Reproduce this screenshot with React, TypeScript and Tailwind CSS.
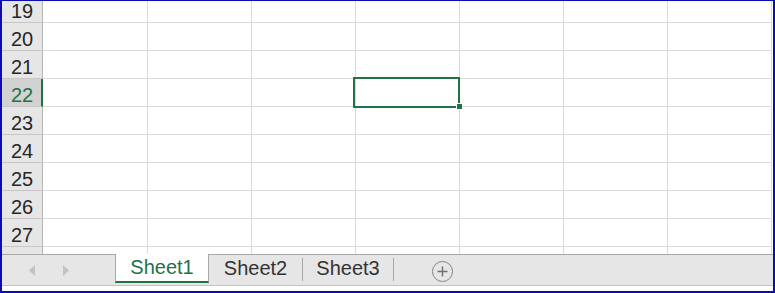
const ROWS = [19, 20, 21, 22, 23, 24, 25, 26, 27, 28];
const COLS = ["w-[105px]", "w-[104px]", "w-[104px]", "w-[104px]", "w-[104px]", "w-[104px]", "w-[104px]"];
const ACTIVE_ROW = 22;
const ACTIVE_COL = 3;
const LAST_VISIBLE = 27;

function Row({ n }: { n: number }) {
  const active = n === ACTIVE_ROW;
  return (
    <div className="flex h-[28px] shrink-0">
      <div
        className={
          active
            ? "flex w-[41px] shrink-0 items-end justify-center border-b border-r-2 border-b-[#c6c6c6] border-r-[#217346] bg-[#d2d2d2] pb-px pl-[1px] text-[#217346]"
            : "flex w-[41px] shrink-0 items-end justify-center border-b border-r border-b-[#c6c6c6] border-r-[#b4b4b4] bg-[#e6e6e6] pb-px text-[#262626]"
        }
      >
        {n <= LAST_VISIBLE && <span className="text-[20px] leading-[20px]">{n}</span>}
      </div>
      {COLS.map((w, i) => (
        <div key={i} className={`relative ${w} shrink-0 border-b border-r border-[#dadada] bg-white`}>
          {active && i === ACTIVE_COL && (
            <>
              <div className="absolute -left-[3px] -top-[2px] z-10 h-[31px] w-[107px] border-2 border-[#217346]" />
              <div className="absolute -bottom-[4px] -right-[4px] z-20 h-[7px] w-[7px] border border-white bg-[#217346]" />
            </>
          )}
        </div>
      ))}
    </div>
  );
}

function Tab({ label, w }: { label: string; w: string }) {
  return (
    <div className={`flex h-[28px] ${w} shrink-0 items-center`}>
      <span className="flex-1 pb-[2px] text-center text-[20px] leading-[20px] text-[#333333]">{label}</span>
      <div className="h-[23px] w-px bg-[#a6a6a6]" />
    </div>
  );
}

export default function App() {
  return (
    <div
      className="flex h-[293px] w-[775px] flex-col overflow-hidden border-b-2 border-l-2 border-r-2 border-t border-[#0c0cb4] bg-white"
      style={{ fontFamily: '"Liberation Sans", Arial, sans-serif' }}
    >
      {/* grid */}
      <div className="h-[253px] shrink-0 overflow-hidden">
        <div className="-mt-[6px] flex flex-col">
          {ROWS.map((n) => (
            <Row key={n} n={n} />
          ))}
        </div>
      </div>

      {/* sheet tabs */}
      <div className="flex h-[37px] shrink-0 flex-col">
        <div className="flex h-[32px] shrink-0 border-b border-[#c4c4c4] bg-[#e6e6e6]">
          <div className="flex w-[113px] shrink-0 items-center gap-[28px] border-t border-[#a8a8a8] pl-[27px] pt-[1px]">
            <svg width="6" height="11" viewBox="0 0 6 11">
              <path d="M6 0 L0 5.5 L6 11 Z" fill="#c3c3c3" />
            </svg>
            <svg width="6" height="11" viewBox="0 0 6 11">
              <path d="M0 0 L6 5.5 L0 11 Z" fill="#c3c3c3" />
            </svg>
          </div>
          <div className="flex h-[29px] w-[94px] shrink-0 items-center justify-center border-x border-b-2 border-x-[#a8a8a8] border-b-[#217346] bg-white">
            <span className="pb-[1px] text-[20px] leading-[20px] text-[#217346]">Sheet1</span>
          </div>
          <div className="flex flex-1 items-start border-t border-[#a8a8a8]">
            <Tab label="Sheet2" w="w-[94px]" />
            <Tab label="Sheet3" w="w-[91px]" />
            <div className="ml-[38px] mt-[6px] flex h-[21px] w-[21px] items-center justify-center rounded-full border border-[#828282]">
              <svg width="11" height="11" viewBox="0 0 11 11">
                <path d="M5.5 0.5 V10.5 M0.5 5.5 H10.5" stroke="#6e6e6e" strokeWidth="1.4" />
              </svg>
            </div>
          </div>
        </div>
        <div className="flex-1 bg-white" />
      </div>
    </div>
  );
}
